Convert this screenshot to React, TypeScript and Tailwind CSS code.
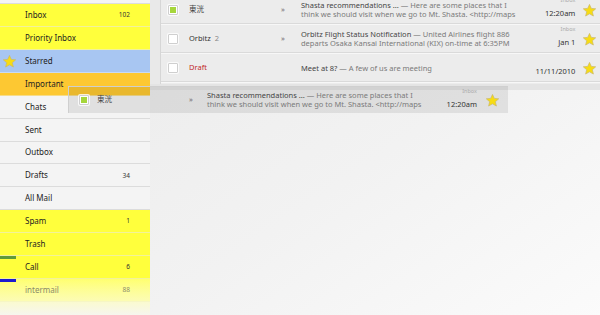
import type { ReactNode } from 'react';

type Folder = {
  label: string;
  count?: string;
  tone?: 'yellow' | 'blue' | 'orange' | 'fade';
  star?: boolean;
  bar?: string;
};

const FOLDERS: Folder[] = [
  { label: 'Inbox', count: '102', tone: 'yellow' },
  { label: 'Priority Inbox', tone: 'yellow' },
  { label: 'Starred', tone: 'blue', star: true },
  { label: 'Important', tone: 'orange' },
  { label: 'Chats' },
  { label: 'Sent' },
  { label: 'Outbox' },
  { label: 'Drafts', count: '34' },
  { label: 'All Mail' },
  { label: 'Spam', count: '1', tone: 'yellow' },
  { label: 'Trash', tone: 'yellow' },
  { label: 'Call', count: '6', tone: 'yellow', bar: 'bg-[#5f9a3a]' },
  { label: 'intermail', count: '88', tone: 'fade', bar: 'bg-[#1b1bd0]' },
];

const TONE: Record<string, string> = {
  yellow: 'bg-[#ffff3c] border-[#f2f29a]',
  blue: 'bg-[#a8c6f2] border-[#c8daf6]',
  orange: 'bg-[#fdc832] border-[#f6dc8a]',
  fade: 'bg-gradient-to-b from-[#ffff70] to-[#fcfcb4] border-[#f6f6c4]',
  plain: 'bg-[#f4f4f4] border-[#dcdcdc]',
};

function Star({ className = '' }: { className?: string }) {
  return (
    <svg viewBox="0 0 24 24" className={className}>
      <path
        d="M12 2.2l2.9 6.4 7 .7-5.3 4.7 1.6 6.9L12 17.3l-6.2 3.6 1.6-6.9L2.1 9.3l7-.7z"
        fill="#f7dc14"
        stroke="#c9b86a"
        strokeWidth="1.1"
        strokeLinejoin="round"
      />
    </svg>
  );
}

function Check({ on }: { on?: boolean }) {
  return (
    <span className="flex h-[10px] w-[10px] items-center justify-center rounded-[1px] border border-[#cfcfcf] bg-white shadow-[0_0_0_1px_rgba(255,255,255,0.8)]">
      {on && <span className="h-[6px] w-[6px] bg-[#a6d63c]" />}
    </span>
  );
}

function Sidebar() {
  return (
    <div className="flex w-[150px] shrink-0 flex-col">
      <div className="h-[4px] border-b border-[#dcdcdc] bg-[#f4f4f4]" />
      {FOLDERS.map((f) => (
        <div
          key={f.label}
          className={`relative flex h-[23px] items-center border-b pl-[25px] pr-[20px] ${TONE[f.tone ?? 'plain']}`}
        >
          {f.bar && <span className={`absolute left-0 top-0 h-[3px] w-[16px] ${f.bar}`} />}
          {f.star && <Star className="absolute left-[2px] top-[4px] h-[15px] w-[15px]" />}
          <span
            className={`flex-1 text-[8px] ${f.tone === 'fade' ? 'text-[#8a8a6a]' : 'text-[#222]'}`}
          >
            {f.label}
          </span>
          {f.count && (
            <span className={`text-[6.5px] ${f.tone === 'fade' ? 'text-[#8a8a6a]' : 'text-[#333]'}`}>
              {f.count}
            </span>
          )}
        </div>
      ))}
      <div className="h-[13px] bg-gradient-to-b from-[#fafad0] to-[#f6f6ee]" />
    </div>
  );
}

type Mail = {
  sender: ReactNode;
  subject: string;
  snippet: ReactNode;
  date: string;
  tag?: string;
  checked?: boolean;
  arrow?: boolean;
};

const MAILS: Mail[] = [
  {
    sender: <span className="text-[#444]">東洸</span>,
    subject: 'Shasta recommendations ...',
    snippet: (
      <>
        {' '}— Here are some places that I<br />
        think we should visit when we go to Mt. Shasta. &lt;http://maps
      </>
    ),
    date: '12:20am',
    tag: 'Inbox',
    checked: true,
    arrow: true,
  },
  {
    sender: (
      <span className="text-[#333]">
        Orbitz <span className="ml-[2px] text-[#888]">2</span>
      </span>
    ),
    subject: 'Orbitz Flight Status Notification',
    snippet: (
      <>
        {' '}— United Airlines flight 886
        <br />
        departs Osaka Kansai International (KIX) on-time at 6:35PM
      </>
    ),
    date: 'Jan 1',
    tag: 'Inbox',
    arrow: true,
  },
  {
    sender: <span className="text-[#c22a2a]">Draft</span>,
    subject: 'Meet at 8?',
    snippet: ' — A few of us are meeting',
    date: '11/11/2010',
  },
];

function MailRow({ m, dense }: { m: Mail; dense?: boolean }) {
  return (
    <div className="flex h-full items-center">
      <div className={`flex shrink-0 ${dense ? 'w-[28px] pl-[10px]' : 'w-[28px] pl-[7px]'}`}>
        <Check on={m.checked} />
      </div>
      <div className="w-[92px] shrink-0 text-[7.5px]">{m.sender}</div>
      <div className={`shrink-0 text-[7.5px] text-[#666] ${dense ? 'w-[18px]' : 'w-[20px]'}`}>
        {m.arrow ? '»' : ''}
      </div>
      <div className="min-w-0 flex-1 whitespace-nowrap text-[7.5px] leading-[9px] text-[#7a7a7a]">
        <span className="text-[#444]">{m.subject}</span>
        {m.snippet}
      </div>
      <div className="flex h-full w-[60px] shrink-0 flex-col items-end">
        <span className="mt-[1px] h-[7px] text-[5.5px] leading-[7px] text-[#aaa]">{m.tag}</span>
        <span className="mt-[5px] text-[7.5px] leading-[9px] text-[#333]">{m.date}</span>
      </div>
      <div className={`flex shrink-0 justify-center ${dense ? 'w-[31px]' : 'w-[29px]'}`}>
        <Star className="h-[15px] w-[15px]" />
      </div>
    </div>
  );
}

export default function App() {
  return (
    <div
      className="relative flex h-[315px] w-[600px] overflow-hidden bg-[#f1f1f1]"
      style={{ fontFamily: '"Noto Sans", "Noto Sans CJK JP", sans-serif' }}
    >
      <Sidebar />
      <div className="flex flex-1 flex-col bg-gradient-to-br from-[#ececec] via-[#f2f2f2] to-[#fbfbfb]">
        <div className="flex h-[84px] bg-[#e9e9e9] pl-[10px] pr-[3px]">
          <div className="mt-[-4px] flex flex-1 flex-col border-x border-[#d6d6d6] bg-[#ececec]">
            {MAILS.map((m, i) => (
              <div
                key={i}
                className="h-[29px] border-b border-[#f7f7f7] shadow-[inset_0_-1px_0_#dadada]"
              >
                <MailRow m={m} />
              </div>
            ))}
          </div>
        </div>
        <div className="h-[6px] bg-[#e4e4e4]" />
      </div>

      {/* drag shadow of the row being moved */}
      <div className="absolute left-[68px] top-[86px] h-[27px] w-[440px] border-l border-t border-[#cfcfcf] bg-black/[0.08]">
        <MailRow m={MAILS[0]} dense />
      </div>
    </div>
  );
}
